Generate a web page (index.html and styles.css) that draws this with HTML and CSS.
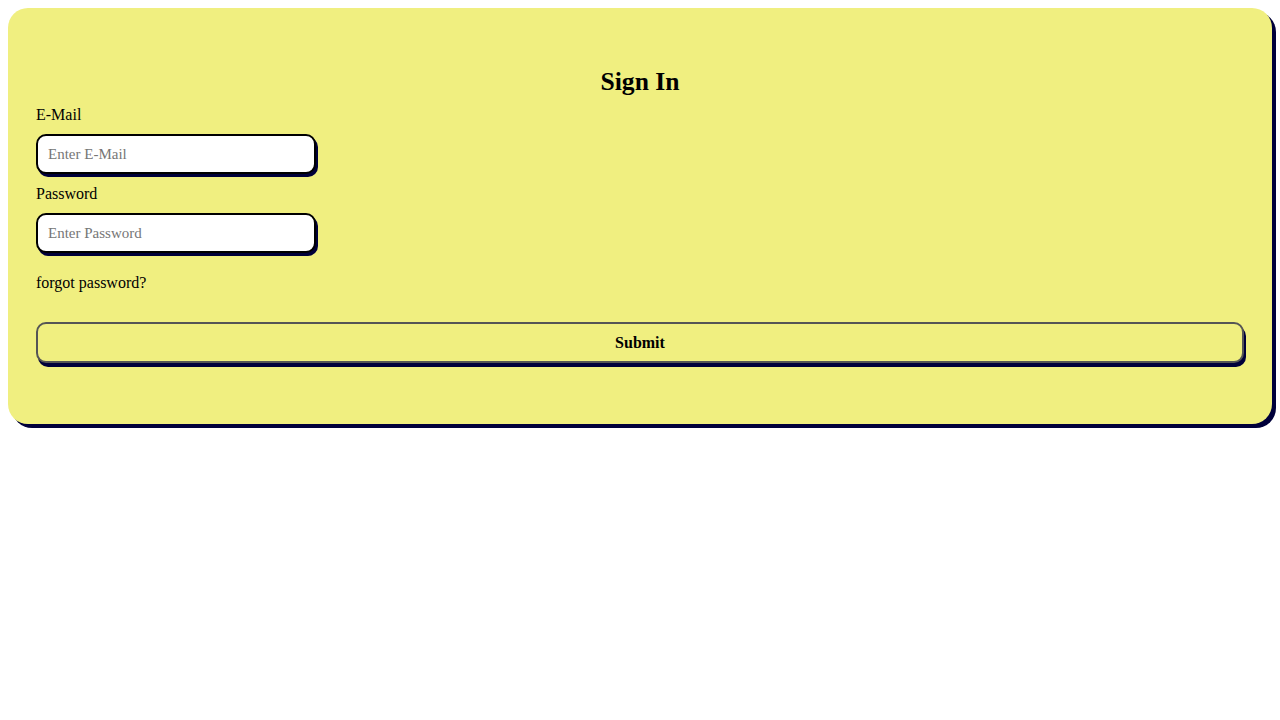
FILE: index.html
```html
<!DOCTYPE html>
<html lang="en">
<head>
<meta charset="utf-8">
<title>Sign In</title>
<link rel="stylesheet" href="styles.css">
</head>
<body>
<form class="card">
  <h2 class="title">Sign In</h2>
  <label class="label" for="email">E-Mail</label>
  <input class="field" id="email" type="text" placeholder="Enter E-Mail">
  <label class="label label-next" for="password">Password</label>
  <input class="field" id="password" type="password" placeholder="Enter Password">
  <div class="forgot">forgot password?</div>
  <button class="submit" type="button">Submit</button>
</form>
</body>
</html>
```
FILE: styles.css
```css
html, body {
  margin: 0;
  padding: 0;
  background: #ffffff;
}
body {
  padding: 8px;
  font-family: "Liberation Serif", "Times New Roman", serif;
  color: #000;
}
.card {
  display: flex;
  flex-direction: column;
  align-items: flex-start;
  box-sizing: border-box;
  height: 416px;
  width: 1264px;
  padding: 40px 28px 0;
  background: #f0ef80;
  border-radius: 20px;
  box-shadow: 4px 4px 0 #00003a;
}
.title {
  align-self: stretch;
  text-align: center;
  margin: 20px 0 10px;
  font-size: 25.6px;
  line-height: 28px;
  font-weight: bold;
}
.label {
  font-size: 16px;
  line-height: 18px;
  margin-bottom: 10px;
}
.label-next {
  margin-top: 11px;
}
.field {
  box-sizing: border-box;
  width: 280px;
  height: 40px;
  margin: 0;
  padding: 0 10px;
  border: 2px solid #000;
  border-radius: 10px;
  background: #fff;
  box-shadow: 2px 3px 0 #00003a;
  font-family: "Liberation Serif", "Times New Roman", serif;
  font-size: 15px;
  outline: none;
}
.field::placeholder {
  color: #767676;
}
.forgot {
  margin-top: 21px;
  font-size: 16px;
  line-height: 18px;
}
.submit {
  align-self: stretch;
  box-sizing: border-box;
  height: 41px;
  margin-top: 30px;
  border: 2px solid #555;
  border-radius: 10px;
  background: #f0ef80;
  box-shadow: 2px 4px 0 #00003a;
  font-family: "Liberation Serif", "Times New Roman", serif;
  font-size: 16px;
  font-weight: bold;
  color: #000;
  cursor: pointer;
}
```
